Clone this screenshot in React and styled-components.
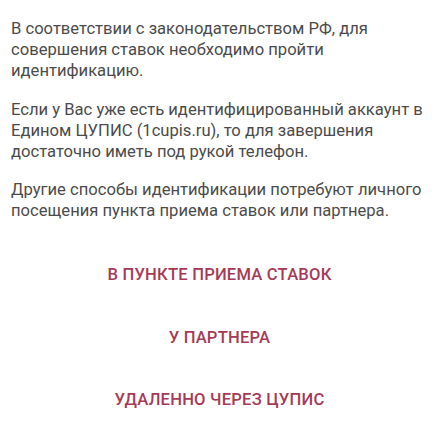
import styled, { createGlobalStyle } from "styled-components";

const GlobalStyle = createGlobalStyle`
  html, body {
    margin: 0;
    padding: 0;
    background: #ffffff;
  }
  body {
    font-family: Roboto, "Noto Sans", sans-serif;
  }
`;

const Screen = styled.div`
  width: 436px;
  height: 424px;
  overflow: hidden;
  box-sizing: border-box;
  padding: 18px 8px 0 11px;
  display: flex;
  flex-direction: column;
`;

const Paragraph = styled.p`
  margin: 0 0 17.5px 0;
  font-size: 16.6px;
  line-height: 21px;
  color: #4b4b4b;
`;

const Actions = styled.div`
  display: flex;
  flex-direction: column;
  align-items: center;
  margin-top: 26.5px;
`;

const ActionButton = styled.button`
  background: none;
  border: none;
  padding: 0;
  height: 62.5px;
  width: 100%;
  flex-shrink: 0;
  display: flex;
  align-items: flex-start;
  justify-content: center;
  font-family: Roboto, "Noto Sans", sans-serif;
  font-size: 16.6px;
  line-height: 20px;
  font-weight: 500;
  color: #a63a56;
  text-transform: uppercase;
  letter-spacing: 0.2px;
  cursor: pointer;
`;

const texts = [
  "В соответствии с законодательством РФ, для совершения ставок необходимо пройти идентификацию.",
  "Если у Вас уже есть идентифицированный аккаунт в Едином ЦУПИС (1cupis.ru), то для завершения достаточно иметь под рукой телефон.",
  "Другие способы идентификации потребуют личного посещения пункта приема ставок или партнера.",
];

const actions = ["В пункте приема ставок", "У партнера", "Удаленно через ЦУПИС"];

export default function App() {
  return (
    <>
      <GlobalStyle />
      <Screen>
        {texts.map((t) => (
          <Paragraph key={t}>{t}</Paragraph>
        ))}
        <Actions>
          {actions.map((a) => (
            <ActionButton key={a}>{a}</ActionButton>
          ))}
        </Actions>
      </Screen>
    </>
  );
}
